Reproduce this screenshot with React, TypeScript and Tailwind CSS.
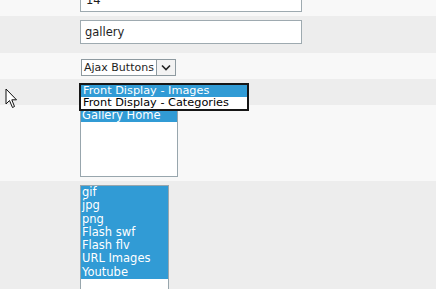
import React from 'react';

const font = { fontFamily: '"DejaVu Sans", Verdana, sans-serif' };

const fileTypes = ['gif', 'jpg', 'png', 'Flash swf', 'Flash flv', 'URL Images', 'Youtube'];

function Cursor() {
  return (
    <svg width="14" height="21" viewBox="0 0 14 21" className="absolute left-[5px] top-[88px]">
      <path
        d="M1 1 L1 16 L4.5 12.5 L7.5 19.5 L9.5 18.5 L6.8 11.8 L11.5 11.8 Z"
        fill="#ffffff"
        stroke="#111111"
        strokeWidth="1"
        strokeLinejoin="miter"
      />
    </svg>
  );
}

export default function App() {
  return (
    <div className="relative w-[436px] h-[289px] overflow-hidden bg-[#ededed] text-[11px] text-[#1e1e1e]" style={font}>
      {/* row: number field, cut at top */}
      <div className="h-[16px] bg-[#f8f8f8] pl-[80px] flex items-end pb-[4px] overflow-hidden">
        <div className="w-[222px] h-[24px] shrink-0 border border-[#9eaab0] bg-white px-[5px] leading-[22px] text-[11.5px]">14</div>
      </div>

      {/* row: folder field */}
      <div className="h-[37px] bg-[#ededed] pl-[80px] pt-[4px]">
        <div className="w-[222px] h-[24px] border border-[#9eaab0] bg-white px-[4px] leading-[22px] text-[11.5px]">gallery</div>
      </div>

      {/* row: button style select */}
      <div className="h-[26px] bg-[#f8f8f8] pl-[81px] pt-[6px]">
        <div className="inline-flex h-[17px] border border-[#8e9aa0] bg-white">
          <span className="pl-[2px] pr-[2px] leading-[15px] text-[11px]">Ajax Buttons</span>
          <span className="w-[19px] border-l border-[#8e9aa0] bg-[#f3f3f3] flex items-center justify-center">
            <svg width="10" height="7" viewBox="0 0 10 7">
              <path d="M1 1.5 L5 5.5 L9 1.5" fill="none" stroke="#222" strokeWidth="1.6" />
            </svg>
          </span>
        </div>
      </div>

      {/* row: display select, opened */}
      <div className="relative h-[26px] bg-[#ededed] pl-[80px]">
        <div className="absolute left-[79px] top-[4px] z-10 w-[170px] border-2 border-[#161616] bg-white text-[11.3px]">
          <div className="h-[12px] leading-[12px] pl-[2px] bg-[#319bd5] text-white">Front Display - Images</div>
          <div className="h-[12px] leading-[12px] pl-[2px] text-black">Front Display - Categories</div>
        </div>
      </div>

      {/* row: start page listbox */}
      <div className="h-[76px] bg-[#f8f8f8] pl-[80px] pt-[2px]">
        <div className="w-[98px] h-[70px] border border-[#98a6ad] bg-white">
          <div className="h-[14px] leading-[14px] pl-[1px] bg-[#319bd5] text-white text-[11.5px]">Gallery Home</div>
        </div>
      </div>

      {/* row: allowed types listbox */}
      <div className="bg-[#ededed] pl-[80px] pt-[4px] h-[110px]">
        <div className="w-[89px] h-[120px] border border-[#98a6ad] bg-white">
          {fileTypes.map(t => (
            <div key={t} className="h-[13.3px] leading-[13.3px] pl-[1px] bg-[#319bd5] text-white text-[11.5px]">
              {t}
            </div>
          ))}
        </div>
      </div>

      <Cursor />
    </div>
  );
}
